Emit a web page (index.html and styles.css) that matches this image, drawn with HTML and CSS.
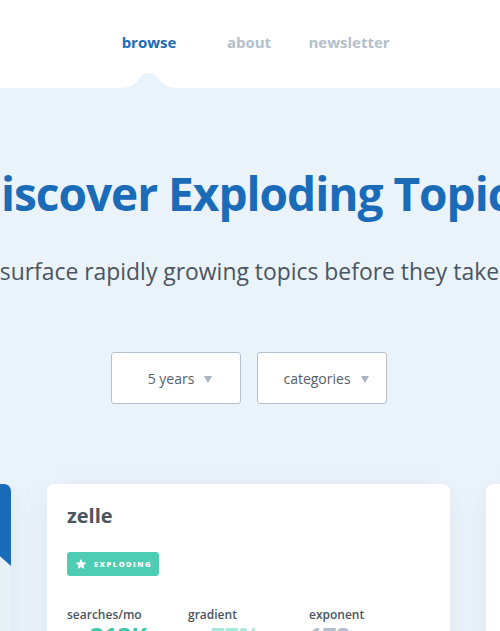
FILE: index.html
```html
<!DOCTYPE html>
<html lang="en">
<head>
<meta charset="utf-8">
<title>Exploding Topics</title>
<link rel="stylesheet" href="styles.css">
</head>
<body>
<header class="header">
  <nav class="nav">
    <a class="nav-item active" href="#">browse
      <svg class="bump" width="60" height="16" viewBox="0 0 60 16"><path d="M0 16 C12 16 16 12 20 7 C24 2 26 1 30 1 C34 1 36 2 40 7 C44 12 48 16 60 16 Z" fill="#ebf3fa"/></svg>
    </a>
    <a class="nav-item" href="#">about</a>
    <a class="nav-item" href="#">newsletter</a>
  </nav>
</header>
<main class="hero">
  <div class="title-row"><h1 class="title">Discover Exploding Topics</h1></div>
  <div class="title-row"><p class="subtitle">We surface rapidly growing topics before they take off.</p></div>
  <div class="filters">
    <button class="select">5 years <span class="caret"></span></button>
    <button class="select">categories <span class="caret"></span></button>
  </div>
  <div class="cards">
    <div class="card card-promo"><div class="promo-top"></div></div>
    <div class="card">
      <h2 class="topic">zelle</h2>
      <span class="badge"><svg class="star" width="12" height="12" viewBox="0 0 24 24"><path d="M12 1.5l3.1 7.1 7.7.7-5.8 5.1 1.7 7.6L12 18l-6.7 4 1.7-7.6-5.8-5.1 7.7-.7z" fill="#fff"/></svg>EXPLODING</span>
      <div class="stats">
        <div class="stat"><div class="stat-label">searches/mo</div><div class="stat-value green indent">313K</div></div>
        <div class="stat"><div class="stat-label">gradient</div><div class="stat-value mint indent">77%</div></div>
        <div class="stat"><div class="stat-label">exponent</div><div class="stat-value grey">173</div></div>
      </div>
    </div>
    <div class="card"></div>
  </div>
</main>
</body>
</html>
```

FILE: styles.css
```css
* { box-sizing: border-box; }
html, body { margin: 0; padding: 0; }
body {
  width: 500px;
  height: 631px;
  overflow: hidden;
  background: #ebf3fa;
  font-family: "Open Sans", "Liberation Sans", sans-serif;
  color: #4a5561;
}
.header {
  height: 88px;
  background: #fff;
  display: flex;
  justify-content: center;
}
.nav {
  display: flex;
  margin-top: 30px;
  height: 26px;
  padding-right: 2px;
}
.nav-item {
  position: relative;
  width: 100px;
  text-align: center;
  font-family: "Open Sans", sans-serif;
  font-weight: 700;
  font-size: 15px;
  color: #b3bfcc;
  text-decoration: none;
  line-height: 24px;
}
.nav-item.active { color: #1a6bb8; }
.bump {
  position: absolute;
  left: 20px;
  top: 42px;
  width: 60px;
  height: 16px;
}
.hero {
  padding-top: 78px;
}
.title-row {
  display: flex;
  justify-content: center;
  white-space: nowrap;
}
.title {
  margin: 0;
  font-family: "Open Sans", sans-serif;
  font-weight: 700;
  font-size: 46px;
  letter-spacing: -1px;
  line-height: 54px;
  color: #1a6bb8;
}
.subtitle {
  margin: 37px 0 0;
  font-family: "Open Sans", sans-serif;
  font-size: 22.9px;
  line-height: 30px;
  color: #4a5561;
}
.filters {
  display: flex;
  justify-content: center;
  gap: 16px;
  margin-top: 65px;
  padding-right: 2px;
}
.select {
  width: 130px;
  height: 52px;
  background: #fff;
  border: 1px solid #b5c0cc;
  border-radius: 3px;
  font-family: "Open Sans", sans-serif;
  font-size: 14px;
  color: #55606c;
  display: flex;
  align-items: center;
  justify-content: center;
  gap: 10px;
  padding: 0 0 0 8px;
}
.caret {
  width: 0;
  height: 0;
  border-left: 4px solid transparent;
  border-right: 4px solid transparent;
  border-top: 7px solid #a9b4c0;
  margin-top: 2px;
}
.cards {
  display: flex;
  justify-content: center;
  gap: 36px;
  margin-top: 80px;
  padding-right: 3px;
}
.card {
  flex: 0 0 401px;
  height: 240px;
  background: #fff;
  border-radius: 7px;
  box-shadow: 0 8px 30px rgba(40, 90, 150, 0.08);
  padding: 18px 20px;
}
.card-promo {
  background: #e8f0f7;
  padding: 0;
  overflow: hidden;
}
.promo-top {
  height: 82px;
  background: #1a6bb8;
  clip-path: polygon(0 0, 100% 0, 100% 100%, 97% 87%, 0 40%);
}
.topic {
  margin: 0;
  font-family: "Open Sans", sans-serif;
  font-weight: 700;
  font-size: 20px;
  line-height: 28px;
  color: #4a5561;
}
.badge {
  display: inline-flex;
  align-items: center;
  gap: 7px;
  margin-top: 22px;
  width: 92px;
  height: 24px;
  padding-left: 8px;
  background: #4ecdb4;
  border-radius: 3px;
  color: #fff;
  font-family: "Open Sans", sans-serif;
  font-weight: 800;
  font-size: 7.5px;
  letter-spacing: 1.5px;
}
.stats {
  display: grid;
  grid-template-columns: 121px 121px 121px;
  margin-top: 30px;
}
.stat-label {
  font-size: 12px;
  line-height: 18px;
  font-weight: 600;
  color: #4a5561;
}
.stat-value {
  font-size: 24px;
  font-weight: 700;
  line-height: 28px;
  margin-top: -2px;
}
.indent { padding-left: 23px; }
.green { color: #3fc6a8; }
.mint { color: #a6e9dc; }
.grey { color: #b3bfcc; }
```
